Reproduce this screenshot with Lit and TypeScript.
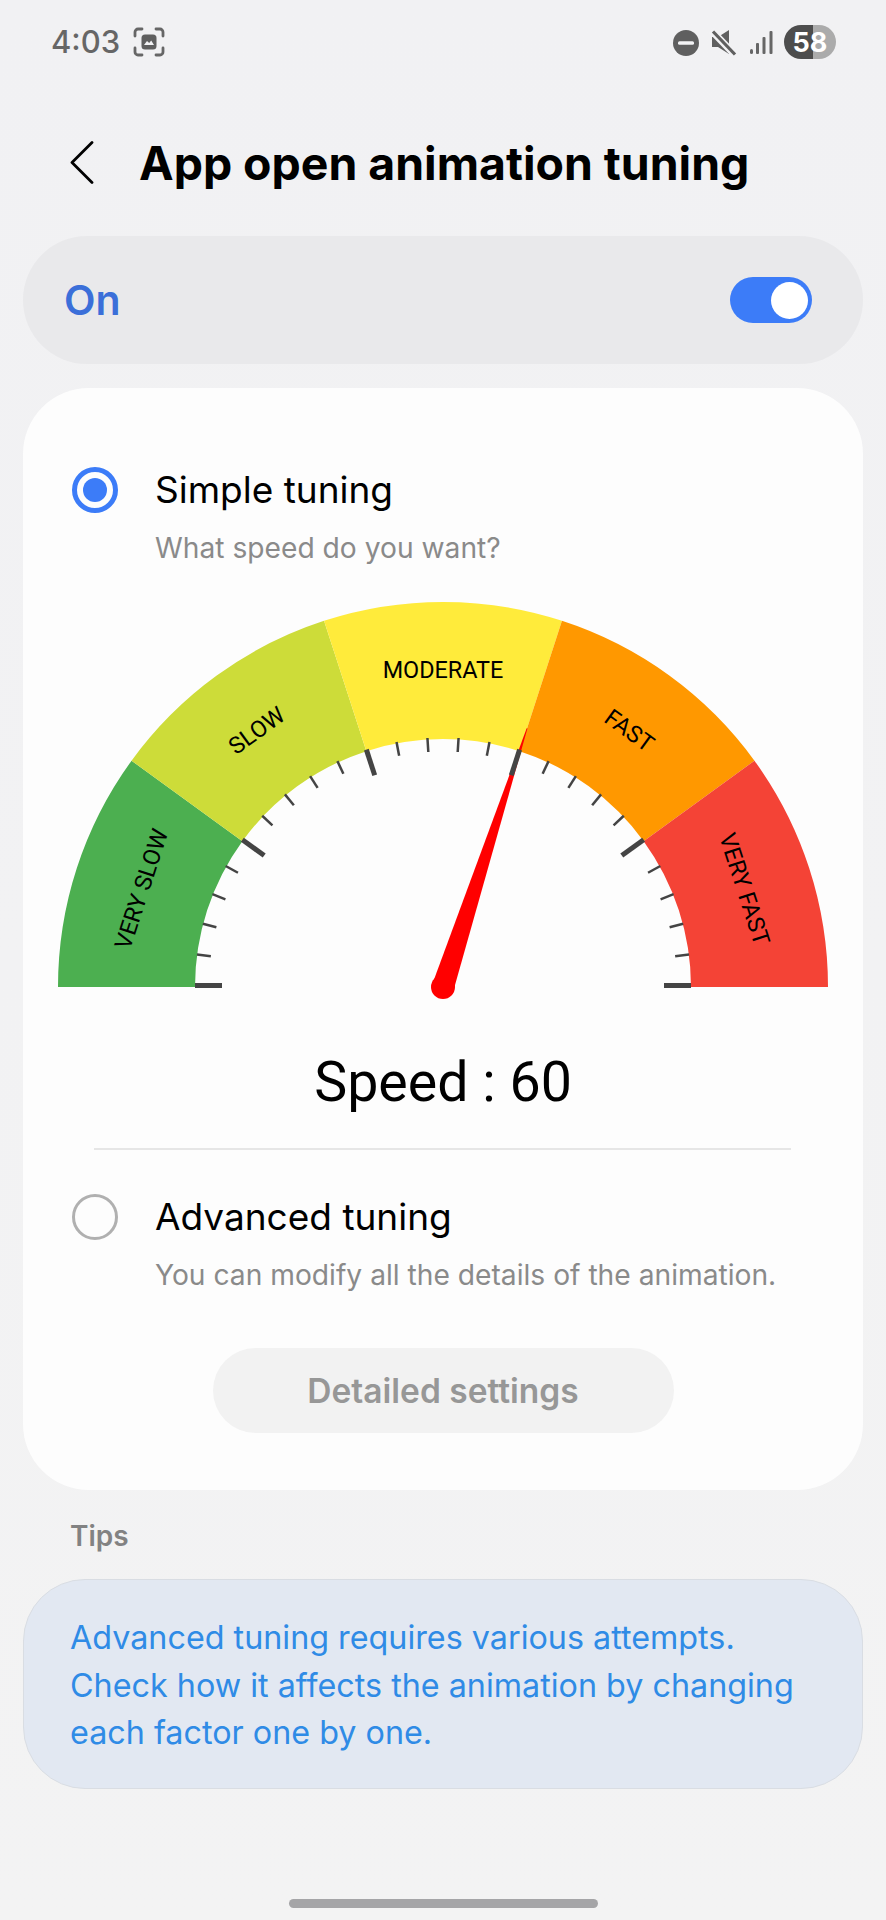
import { LitElement, html, css, svg } from "lit";
import { customElement } from "lit/decorators.js";

const CX = 443;
const CY = 987;
const OUTER = 385;
const INNER = 248;

const pt = (r: number, deg: number, cy = CY) => {
  const a = (deg * Math.PI) / 180;
  return [CX - r * Math.cos(a), cy - r * Math.sin(a)];
};

const SEGMENTS = [
  { color: "#4caf50", label: "VERY SLOW" },
  { color: "#cddc39", label: "SLOW" },
  { color: "#ffeb3b", label: "MODERATE" },
  { color: "#ff9800", label: "FAST" },
  { color: "#f44336", label: "VERY FAST" },
];

const segPath = (i: number) => {
  const a0 = i * 36;
  const a1 = (i + 1) * 36;
  const [x0, y0] = pt(OUTER, a0);
  const [x1, y1] = pt(OUTER, a1);
  const [x2, y2] = pt(INNER, a1);
  const [x3, y3] = pt(INNER, a0);
  return `M${x0} ${y0}A${OUTER} ${OUTER} 0 0 1 ${x1} ${y1}L${x2} ${y2}A${INNER} ${INNER} 0 0 0 ${x3} ${y3}Z`;
};

const speed = 60;
const needleAngle = (speed / 100) * 180;

const needlePoints = () => {
  const len = 272;
  const a = (needleAngle * Math.PI) / 180;
  const dx = -Math.cos(a);
  const dy = -Math.sin(a);
  const nx = -dy;
  const ny = dx;
  const p = (d: number, w: number) => `${CX + dx * d + nx * w},${CY + dy * d + ny * w}`;
  return [p(0, 11), p(len, 0.4), p(len, -0.4), p(0, -11)].join(" ");
};

@customElement("app-root")
export class AppRoot extends LitElement {
  static styles = css`
    :host {
      display: block;
      width: 886px;
      height: 1920px;
      overflow: hidden;
      background: linear-gradient(#f1f1f3, #f3f3f3);
      font-family: Inter, Roboto, sans-serif;
      color: #000;
    }
    .status {
      height: 70px;
      display: flex;
      align-items: center;
      padding: 13px 44px 0 51px;
      box-sizing: border-box;
    }
    .time {
      font-size: 31px;
      font-weight: 500;
      color: #666;
      line-height: 36px;
      margin-right: 13px;
    }
    .spacer {
      flex: 1;
    }
    .status svg {
      display: block;
    }
    .header {
      height: 166px;
      display: flex;
      align-items: flex-start;
      padding: 71px 0 0 70px;
      box-sizing: border-box;
      gap: 45px;
    }
    .title {
      font-size: 46.400px;
      font-weight: 700;
      line-height: 44px;
      white-space: nowrap;
    }
    .header svg {
      display: block;
    }
    .onbar {
      margin: 0 23px;
      height: 128px;
      border-radius: 64px;
      background: #e9e9eb;
      display: flex;
      align-items: center;
      justify-content: space-between;
      padding: 0 51px 0 41px;
    }
    .on {
      font-size: 41px;
      font-weight: 600;
      color: #3b6fd9;
    }
    .toggle {
      width: 82px;
      height: 46px;
      border-radius: 23px;
      background: #3c7cf8;
      display: flex;
      align-items: center;
      justify-content: flex-end;
      padding-right: 4px;
      box-sizing: border-box;
    }
    .knob {
      width: 37px;
      height: 37px;
      border-radius: 50%;
      background: #fff;
    }
    .card {
      margin: 24px 23px 0;
      background: #fdfdfd;
      border-radius: 66px;
      padding: 79px 0 57px;
    }
    .option {
      display: grid;
      grid-template-columns: 46px 1fr;
      column-gap: 37px;
      padding-left: 49px;
    }
    .radio {
      width: 46px;
      height: 46px;
      box-sizing: border-box;
      border-radius: 50%;
      display: flex;
      align-items: center;
      justify-content: center;
    }
    .radio.sel {
      border: 5px solid #3c7cf8;
    }
    .radio.sel::after {
      content: "";
      width: 24px;
      height: 24px;
      border-radius: 50%;
      background: #3c7cf8;
    }
    .radio.off {
      border: 3px solid #b0b0b0;
    }
    .opt-title {
      font-size: 37px;
      line-height: 46px;
      white-space: nowrap;
    }
    .opt-sub {
      grid-column: 2;
      margin-top: 15px;
      font-size: 28.200px;
      line-height: 40px;
      color: #8a8a8a;
      white-space: nowrap;
    }
    .gauge {
      display: block;
      margin-top: 22px;
    }
    .speed {
      margin-top: 31px;
      margin-bottom: -1px;
      text-align: center;
      font-family: Roboto, sans-serif;
      font-size: 55.500px;
      line-height: 64px;
    }
    .divider {
      height: 2px;
      margin: 34px 72px 44px 71px;
      background: #e6e6e6;
    }
    .detail {
      margin: 53px auto 0;
      width: 461px;
      height: 85px;
      border-radius: 43px;
      background: #f2f2f2;
      color: #979797;
      font-size: 33.500px;
      font-weight: 600;
      display: flex;
      align-items: center;
      justify-content: center;
    }
    .tips-label {
      margin: 28px 0 25px 70px;
      font-size: 28px;
      line-height: 36px;
      font-weight: 600;
      color: #828282;
    }
    .tips {
      margin: 0 23px;
      height: 210px;
      box-sizing: border-box;
      border: 1px solid #d9dde3;
      border-radius: 62px;
      background: #e2e8f2;
      padding: 34px 0 0 46px;
      color: #2f8be6;
      font-size: 32.300px;
      line-height: 47.500px;
      white-space: nowrap;
    }
    .home {
      margin: 110px auto 0;
      width: 309px;
      height: 9px;
      border-radius: 5px;
      background: #a5a5a7;
    }
    .gauge text {
      font-family: Roboto, sans-serif;
      font-size: 23.400px;
      fill: #000;
      text-anchor: middle;
      dominant-baseline: central;
    }
  `;

  private gauge() {
    const ticks = [];
    for (let i = 0; i <= 25; i++) {
      const major = i % 5 === 0;
      const a = i * 7.2;
      const [x1, y1] = pt(INNER, a, 985.5);
      const [x2, y2] = pt(INNER + (major ? -27 : -14), a, 985.5);
      ticks.push(
        svg`<line x1=${x1} y1=${y1} x2=${x2} y2=${y2} stroke="#444" stroke-width=${major ? 5 : 2.5}></line>`
      );
    }
    return html`<svg class="gauge" width="840" height="430" viewBox="23 590 840 430">
      ${SEGMENTS.map((s, i) => svg`<path d=${segPath(i)} fill=${s.color}></path>`)}
      ${SEGMENTS.map((s, i) => {
        const a = i * 36 + 18;
        const [x, y] = pt(317, a);
        return svg`<text x=${x} y=${y} transform="rotate(${a - 90} ${x} ${y})">${s.label}</text>`;
      })}
      <polygon points=${needlePoints()} fill="#ff0000"></polygon>
      <circle cx=${CX} cy=${CY} r="12" fill="#ff0000"></circle>
      ${ticks}
    </svg>`;
  }

  render() {
    return html`
      <div class="status">
        <span class="time">4:03</span>
        <svg width="32" height="30" viewBox="0 0 32 30" fill="none">
          <path d="M2 9V5a3 3 0 0 1 3-3h4M23 2h4a3 3 0 0 1 3 3v4M30 21v4a3 3 0 0 1-3 3h-4M9 28H5a3 3 0 0 1-3-3v-4" stroke="#666" stroke-width="2.800" stroke-linecap="round"></path>
          <rect x="8.500" y="7.500" width="15" height="15" rx="3.500" fill="#5f5f5f"></rect>
          <path d="M11 18l3-4 2.200 2 2-2.400 2.800 4.400z" fill="#f2f2f4"></path>
        </svg>
        <span class="spacer"></span>
        <svg width="172" height="36" viewBox="670 23 172 36" fill="none">
          <circle cx="686" cy="42" r="13" fill="#5f5f5f"></circle>
          <rect x="678" y="40.200" width="16" height="3.600" rx="1.500" fill="#f2f2f4"></rect>
          <path d="M712 36h6l11-7v24l-11-7h-6z" fill="#5f5f5f"></path>
          <path d="M711 29l24 25" stroke="#f2f2f4" stroke-width="7"></path>
          <path d="M713 30.500l22 23" stroke="#5f5f5f" stroke-width="3.200"></path>
          <rect x="750" y="48" width="3" height="5" rx="1.500" fill="#666"></rect>
          <rect x="756" y="42" width="3" height="11" rx="1" fill="#666"></rect>
          <rect x="762.500" y="36" width="3" height="17" rx="1" fill="#666"></rect>
          <rect x="769.500" y="30" width="3" height="23" rx="1" fill="#666"></rect>
          <path d="M813 24h6a17 17 0 0 1 0 34h-6z" fill="#ababab"></path>
          <path d="M813 24h-12a17 17 0 0 0 0 34h12z" fill="#4d4d4d"></path>
          <text x="810" y="51" fill="#fff" text-anchor="middle" font-size="27" font-weight="700" font-family="Inter, sans-serif">58</text>
        </svg>
      </div>

      <div class="header">
        <svg width="24" height="44" viewBox="0 0 24 44" fill="none">
          <path d="M22 1.500 2 21.500 22 41.500" stroke="#000" stroke-width="2.800" stroke-linecap="round" stroke-linejoin="round"></path>
        </svg>
        <div class="title">App open animation tuning</div>
      </div>

      <div class="onbar">
        <span class="on">On</span>
        <span class="toggle"><span class="knob"></span></span>
      </div>

      <div class="card">
        <div class="option">
          <span class="radio sel"></span>
          <span class="opt-title">Simple tuning</span>
          <span class="opt-sub">What speed do you want?</span>
        </div>
        ${this.gauge()}
        <div class="speed">Speed : ${speed}</div>
        <div class="divider"></div>
        <div class="option">
          <span class="radio off"></span>
          <span class="opt-title">Advanced tuning</span>
          <span class="opt-sub">You can modify all the details of the animation.</span>
        </div>
        <div class="detail">Detailed settings</div>
      </div>

      <div class="tips-label">Tips</div>
      <div class="tips">
        Advanced tuning requires various attempts.<br />
        Check how it affects the animation by changing<br />
        each factor one by one.
      </div>
      <div class="home"></div>
    `;
  }
}
